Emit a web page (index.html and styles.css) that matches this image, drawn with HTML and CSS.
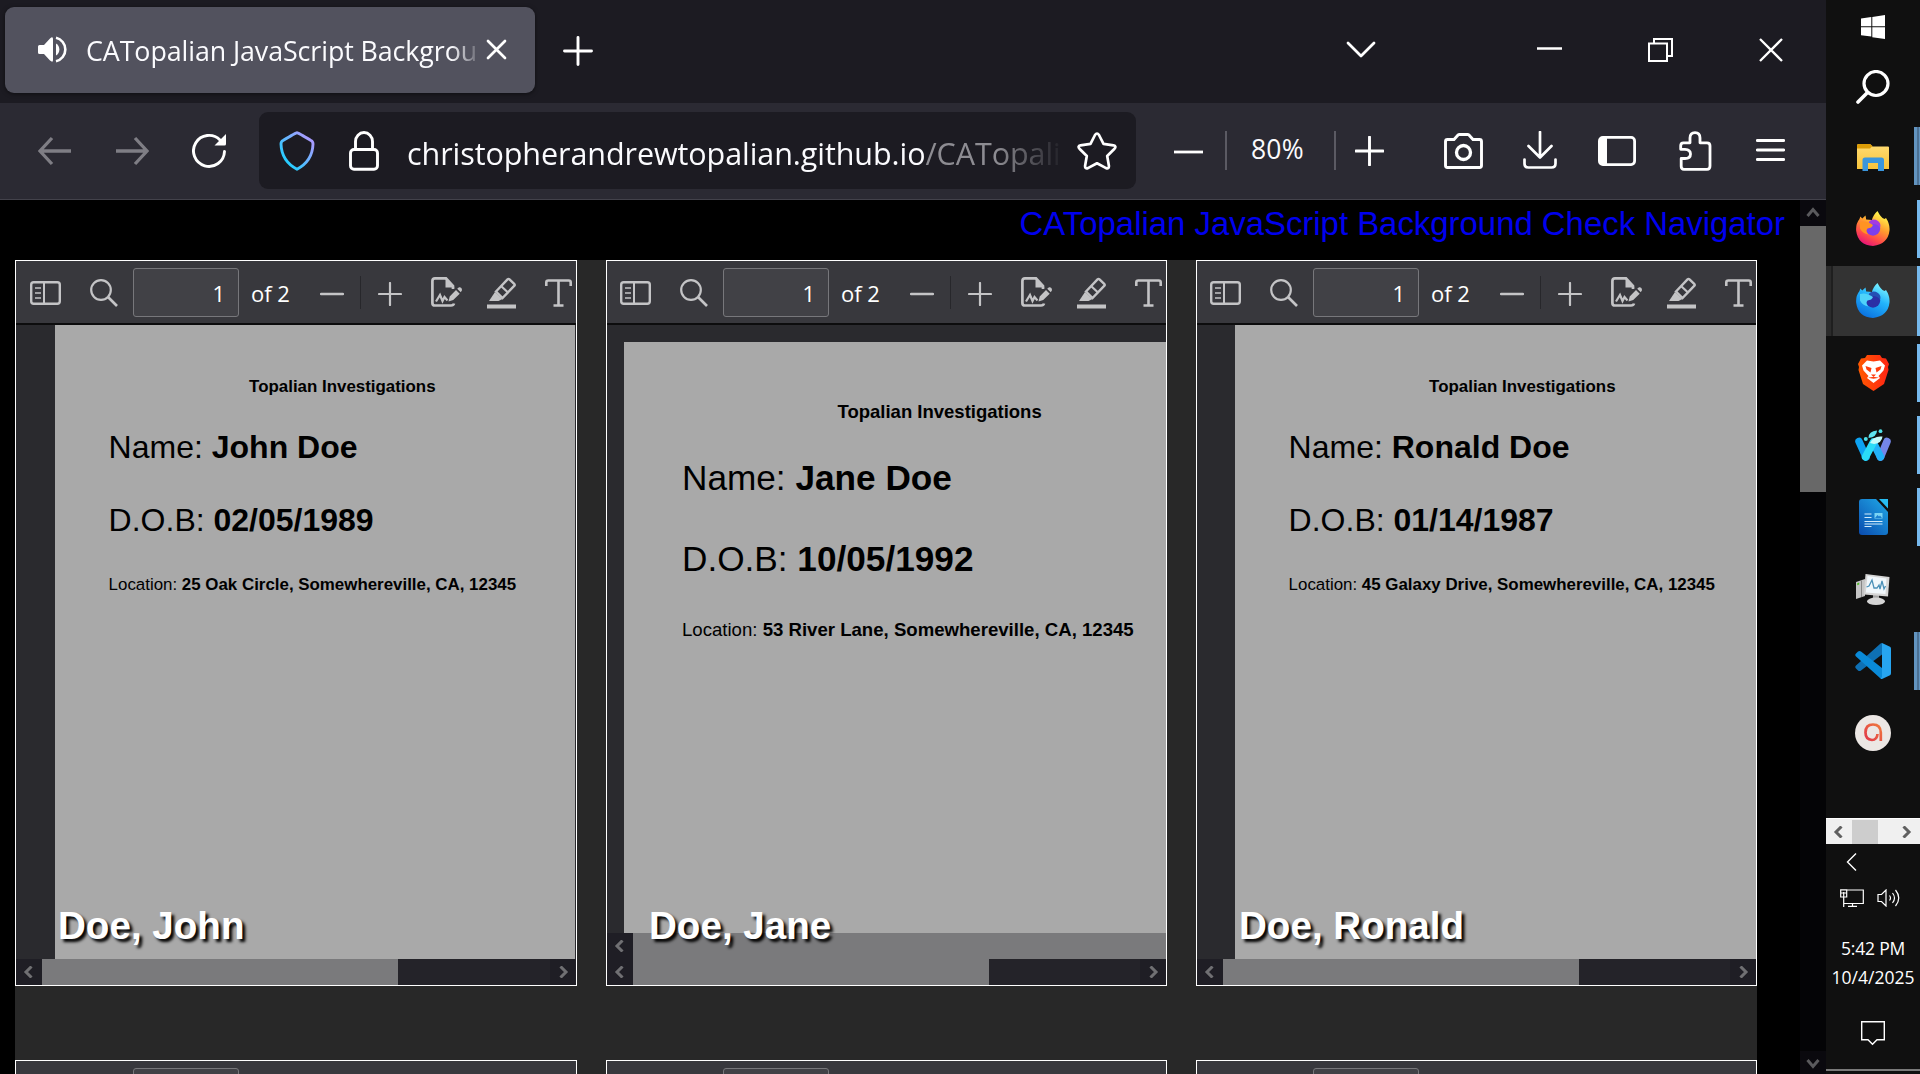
FILE: index.html
```html
<!DOCTYPE html>
<html lang="en">
<head>
<meta charset="utf-8">
<title>CATopalian JavaScript Background Check Navigator</title>
<link rel="stylesheet" href="styles.css">
</head>
<body>
<svg class="defs" width="0" height="0" aria-hidden="true">
  <defs>
    <linearGradient id="shieldG" x1="0" y1="1" x2="1" y2="0"><stop offset=".15" stop-color="#1fd0ff"/><stop offset=".85" stop-color="#a79cff"/></linearGradient>
    <linearGradient id="ffG" x1=".8" y1="0" x2=".3" y2="1"><stop offset=".1" stop-color="#fff24a"/><stop offset=".45" stop-color="#ff9a2e"/><stop offset=".75" stop-color="#ff4a4a"/><stop offset="1" stop-color="#e4107c"/></linearGradient>
    <linearGradient id="fbG" x1=".8" y1="0" x2=".3" y2="1"><stop offset=".05" stop-color="#7cf3ff"/><stop offset=".45" stop-color="#22b4fb"/><stop offset="1" stop-color="#0a70e0"/></linearGradient>
    <linearGradient id="brG"><stop offset="0" stop-color="#ff5a00"/><stop offset="1" stop-color="#ff2414"/></linearGradient>
    <linearGradient id="wrG" x1=".9" y1="0" x2=".1" y2="1"><stop offset="0" stop-color="#1fa6e6"/><stop offset="1" stop-color="#0b4fb0"/></linearGradient>
    <linearGradient id="foG" x1="0" y1="0" x2="0" y2="1"><stop offset="0" stop-color="#ffdc74"/><stop offset="1" stop-color="#f8c33a"/></linearGradient>
    <linearGradient id="aG" x1="0" y1="1" x2="1" y2="0"><stop offset="0" stop-color="#e0354a"/><stop offset="1" stop-color="#f07a3c"/></linearGradient>
  </defs>
  <symbol id="i-side" viewBox="0 0 31 24"><rect x="1.2" y="1.2" width="28.6" height="21.6" rx="2.5" fill="none" stroke="currentColor" stroke-width="2.4"/><path d="M14 1v22" stroke="currentColor" stroke-width="2"/><path d="M5 7h6M5 12h6M5 17h6" stroke="currentColor" stroke-width="1.6"/></symbol>
  <symbol id="i-find" viewBox="0 0 28 28"><circle cx="11" cy="11" r="9.8" fill="none" stroke="currentColor" stroke-width="2.2"/><path d="M18 18l9 9" stroke="currentColor" stroke-width="2.6"/></symbol>
  <symbol id="i-minus" viewBox="0 0 24 24"><path d="M1 12h22" stroke="currentColor" stroke-width="2.4" stroke-linecap="round"/></symbol>
  <symbol id="i-plus" viewBox="0 0 24 24"><path d="M1 12h22M12 1v22" stroke="currentColor" stroke-width="2.2" stroke-linecap="round"/></symbol>
  <symbol id="i-sign" viewBox="0 0 31 30"><path d="M23 26.5q-.5 2-3 2H4q-2.600 0-2.600-2.600V4Q1.400 1.400 4 1.400h11L22 9v3" fill="none" stroke="currentColor" stroke-width="2.700"/><path d="M14.500 1l9 9.500h-9z" fill="currentColor"/><path d="M5 24.500l4-6.500 2.500 6 2-4 3 3.500" fill="none" stroke="currentColor" stroke-width="2.200"/><path d="M17.500 24.500l1.200-5 6.300-6.500 3.700 3.700-6.500 6.300zM26.200 11.800l1.800-1.500q3-.3 3 3l-1.200 2z" fill="currentColor"/></symbol>
  <symbol id="i-mark" viewBox="0 0 29 32"><path d="M0 27.500h29v4H0z" fill="currentColor"/><path d="M9 14.500L20.500 2.400q1-1 2 0l4.700 4.500q1 1 0 2L15.500 21z" fill="none" stroke="currentColor" stroke-width="2.400"/><path d="M14 9l7 6.500" stroke="currentColor" stroke-width="2.200"/><path d="M8 15l7.500 7-4 2H2z" fill="currentColor"/></symbol>
  <symbol id="i-text" viewBox="0 0 27 28"><path d="M1.300 7V3.500Q1.300 1.500 3.300 1.500h20.400q2 0 2 2V7M13.500 1.500V26M8.500 26.500h10" fill="none" stroke="currentColor" stroke-width="2.600"/></symbol>
  <symbol id="i-left" viewBox="0 0 10 12"><path d="M8.500 .5L3 6l5.500 5.500" fill="none" stroke="currentColor" stroke-width="3"/></symbol>
  <symbol id="i-right" viewBox="0 0 10 12"><path d="M1.500 .5L7 6l-5.500 5.500" fill="none" stroke="currentColor" stroke-width="3"/></symbol>
  <symbol id="i-fox" viewBox="0 0 34 35"><path d="M21.500 0c1.500 3 3 5 5 7l2 1 1.500-1q4 6 3.500 12.500Q32 33 17 35 2 34 .2 20-.5 13 3.500 8l.8-2.500 2 2L9.500 4.500l.7 4L16 9Q17 4 21.500 0z"/></symbol>
</svg>
<div class="desktop">
<main class="browser">
  <header class="tabs">
    <div class="tab">
      <svg class="snd" width="30" height="27" viewBox="0 0 30 27"><path d="M1.500 9H6l6-6.500Q15 0 15 3v21q0 3-3 .5L6 18H1.500Q0 18 0 16.500v-6Q0 9 1.500 9z" fill="#fff"/><path d="M18 7.500a7 7 0 0 1 0 12z" fill="#fff"/><path d="M18 1.800a12 12 0 0 1 0 23.400" fill="none" stroke="#fff" stroke-width="2.600"/></svg>
      <span class="tab-title">CATopalian JavaScript Backgrou</span>
      <svg class="tab-x" width="21" height="21" viewBox="0 0 21 21"><path d="M2 2l17 17M19 2L2 19" stroke="#fff" stroke-width="2.700" stroke-linecap="round"/></svg>
    </div>
    <svg class="newtab" width="30" height="30" viewBox="0 0 30 30"><path d="M1.500 15h27M15 1.500v27" stroke="#fff" stroke-width="2.900" stroke-linecap="round"/></svg>
    <div class="win">
      <svg width="30" height="18" viewBox="0 0 30 18"><path d="M2 2l13 13L28 2" fill="none" stroke="#fff" stroke-width="2.800" stroke-linecap="round" stroke-linejoin="round"/></svg>
      <svg class="w-min" width="25" height="24" viewBox="0 0 25 24"><path d="M0 10.500h25" stroke="#fff" stroke-width="2.500"/></svg>
      <svg class="w-max" width="25" height="24" viewBox="0 0 25 24"><path d="M1 5.500h18V23H1zM6 5V1h18v17h-5" fill="none" stroke="#fff" stroke-width="2"/></svg>
      <svg class="w-cls" width="24" height="24" viewBox="0 0 24 24"><path d="M1 1l22 22M23 1L1 23" stroke="#fff" stroke-width="2.300"/></svg>
    </div>
  </header>
  <nav class="bar">
    <svg class="b-back dim" width="34" height="30" viewBox="0 0 34 30"><path d="M14 2L2 15l12 13M2 15h31" fill="none" stroke="currentColor" stroke-width="3.300"/></svg>
    <svg class="b-fwd dim" width="34" height="30" viewBox="0 0 34 30"><path d="M20 2l12 13-12 13M32 15H1" fill="none" stroke="currentColor" stroke-width="3.300"/></svg>
    <svg class="b-rel" width="35" height="35" viewBox="0 0 35 35"><path d="M32.500 18.500A15.500 15.500 0 1 1 28 7" fill="none" stroke="#fff" stroke-width="2.900" stroke-linecap="round"/><path d="M34 1v10q0 1.500-1.500 1.500H22.500z" fill="#fff"/></svg>
    <div class="url">
      <svg width="36" height="40" viewBox="0 0 36 40"><path d="M18 1.800Q19 1.800 32 9.500q2 1 2 3.500-.5 17-16 25.200Q2.500 30 2 13q0-2.500 2-3.500Q17 1.800 18 1.800z" fill="none" stroke="url(#shieldG)" stroke-width="2.900"/></svg>
      <svg class="lock" width="30" height="40" viewBox="0 0 30 40"><rect x="1.500" y="18.500" width="27" height="19.800" rx="3.500" fill="none" stroke="#fff" stroke-width="2.900"/><path d="M6.500 18V10.500a8.500 9 0 0 1 17 0V18" fill="none" stroke="#fff" stroke-width="2.900"/></svg>
      <span class="addr">christopherandrewtopalian.github.io<span class="path">/CATopali</span></span>
      <svg class="star" width="40" height="38" viewBox="0 0 40 38"><path d="M18 3q2-3 4 0l4.500 8.800 10 1.500q3.200.8 1 3.400l-7.300 7.300 1.700 9.800q.2 3.300-2.800 2.300L20 31.300l-9.100 4.800q-3 1-2.800-2.300L9.800 24 2.500 16.700q-2.200-2.600 1-3.400l10-1.500z" fill="none" stroke="#fff" stroke-width="2.700" stroke-linejoin="round"/></svg>
    </div>
    <svg class="z-min" width="30" height="4"><path d="M0 2h29" stroke="#fff" stroke-width="2.800"/></svg>
    <span class="sep s1"></span>
    <span class="zoom">80%</span>
    <span class="sep s2"></span>
    <svg class="z-plus" width="29" height="30" viewBox="0 0 29 30"><path d="M1 15h27M14.500 1v28" stroke="#fff" stroke-width="2.900" stroke-linecap="round"/></svg>
    <svg class="b-cam" width="39" height="36" viewBox="0 0 39 36"><path d="M3.500 6.500H10l4-4.500q.5-.5 1.500-.5h8q1 0 1.500.5l4 4.500h6.500q2 0 2 2v24q0 2-2 2h-32q-2 0-2-2v-24q0-2 2-2z" fill="none" stroke="#fff" stroke-width="2.900"/><circle cx="19.500" cy="19.500" r="7" fill="none" stroke="#fff" stroke-width="3.300"/></svg>
    <svg class="b-down" width="34" height="38" viewBox="0 0 34 38"><path d="M17 1v25M5.500 15L17 26.500 28.500 15M1.500 28.500v4q0 4 4 4h23q4 0 4-4v-4" fill="none" stroke="#fff" stroke-width="2.700" stroke-linecap="round" stroke-linejoin="round"/></svg>
    <svg class="b-side" width="38" height="30" viewBox="0 0 38 30"><rect x="1.400" y="1.400" width="35.200" height="27.200" rx="3.500" fill="none" stroke="#fff" stroke-width="2.800"/><path d="M2 2h7v26H2z" fill="#fff"/></svg>
    <svg class="b-ext" width="33" height="40" viewBox="0 0 33 40"><path d="M4.500 11.800h6.500V7q0-5.300 5-5.300T21 7v4.800h7q3 0 3 3V35q0 3.300-3 3.300H5q-2.800 0-2.800-3V27.500H6q5.500 0 5.500-4.500T6 18.300H1.700v-3.500q0-3 2.800-3z" fill="none" stroke="#fff" stroke-width="2.800" stroke-linejoin="round"/></svg>
    <svg class="b-menu" width="29" height="22" viewBox="0 0 29 22"><path d="M1.300 1.500h26.400M1.300 11h26.400M1.300 20.500h26.400" stroke="#fff" stroke-width="2.800" stroke-linecap="round"/></svg>
  </nav>
  <section class="content">
    <div class="site">
      <h1 class="site-title">CATopalian JavaScript Background Check Navigator</h1>
      <div class="grid">
        <article class="card">
          <div class="tools"><svg class="t1"><use href="#i-side"/></svg><svg class="t2"><use href="#i-find"/></svg><span class="pg">1</span><span class="of">of 2</span><svg class="t3"><use href="#i-minus"/></svg><i class="ts"></i><svg class="t4"><use href="#i-plus"/></svg><svg class="t5"><use href="#i-sign"/></svg><svg class="t6"><use href="#i-mark"/></svg><svg class="t7"><use href="#i-text"/></svg></div>
          <div class="view"><div class="page">
            <p class="org">Topalian Investigations</p>
            <p class="big">Name: <b>John Doe</b></p>
            <p class="big dob">D.O.B: <b>02/05/1989</b></p>
            <p class="loc">Location: <b>25 Oak Circle, Somewhereville, CA, 12345</b></p>
          </div></div>
          <div class="hbar"><span class="hb"><svg><use href="#i-left"/></svg></span><span class="thumb"></span><span class="hb end"><svg><use href="#i-right"/></svg></span></div>
          <div class="label">Doe, John</div>
        </article>
        <article class="card zoomed">
          <div class="tools"><svg class="t1"><use href="#i-side"/></svg><svg class="t2"><use href="#i-find"/></svg><span class="pg">1</span><span class="of">of 2</span><svg class="t3"><use href="#i-minus"/></svg><i class="ts"></i><svg class="t4"><use href="#i-plus"/></svg><svg class="t5"><use href="#i-sign"/></svg><svg class="t6"><use href="#i-mark"/></svg><svg class="t7"><use href="#i-text"/></svg></div>
          <div class="view"><div class="page">
            <p class="org">Topalian Investigations</p>
            <p class="big">Name: <b>Jane Doe</b></p>
            <p class="big dob">D.O.B: <b>10/05/1992</b></p>
            <p class="loc">Location: <b>53 River Lane, Somewhereville, CA, 12345</b></p>
          </div></div>
          <div class="hbar"><span class="hb"><svg><use href="#i-left"/></svg></span><span class="thumb full"></span></div>
          <div class="hbar"><span class="hb"><svg><use href="#i-left"/></svg></span><span class="thumb"></span><span class="hb end"><svg><use href="#i-right"/></svg></span></div>
          <div class="label">Doe, Jane</div>
        </article>
        <article class="card">
          <div class="tools"><svg class="t1"><use href="#i-side"/></svg><svg class="t2"><use href="#i-find"/></svg><span class="pg">1</span><span class="of">of 2</span><svg class="t3"><use href="#i-minus"/></svg><i class="ts"></i><svg class="t4"><use href="#i-plus"/></svg><svg class="t5"><use href="#i-sign"/></svg><svg class="t6"><use href="#i-mark"/></svg><svg class="t7"><use href="#i-text"/></svg></div>
          <div class="view"><div class="page">
            <p class="org">Topalian Investigations</p>
            <p class="big">Name: <b>Ronald Doe</b></p>
            <p class="big dob">D.O.B: <b>01/14/1987</b></p>
            <p class="loc">Location: <b>45 Galaxy Drive, Somewhereville, CA, 12345</b></p>
          </div></div>
          <div class="hbar"><span class="hb"><svg><use href="#i-left"/></svg></span><span class="thumb"></span><span class="hb end"><svg><use href="#i-right"/></svg></span></div>
          <div class="label">Doe, Ronald</div>
        </article>
        <article class="card next"><div class="tools"><span class="pg"></span></div></article>
        <article class="card next"><div class="tools"><span class="pg"></span></div></article>
        <article class="card next"><div class="tools"><span class="pg"></span></div></article>
      </div>
    </div>
    <div class="vbar">
      <span class="vb"><svg width="14" height="12" viewBox="0 0 14 12"><path d="M1.500 9L7 2.500l5.500 6.500" fill="none" stroke="#5a5a5d" stroke-width="3"/></svg></span>
      <span class="vthumb"></span>
      <span class="vb last"><svg width="14" height="12" viewBox="0 0 14 12"><path d="M1.500 3L7 9.500 12.500 3" fill="none" stroke="#5a5a5d" stroke-width="3"/></svg></span>
    </div>
  </section>
</main>
<aside class="taskbar">
  <div class="slot start"><svg width="24" height="24" viewBox="0 0 24 24"><path d="M0 3.500l10.300-1.400v9.200H0zM11.300 1.900L24 0v11.300H11.300zM0 12.300h10.300v9.300L0 20.300zM11.300 12.300H24V24l-12.700-1.800z" fill="#fff"/></svg></div>
  <div class="slot srch"><svg width="34" height="34" viewBox="0 0 34 34"><circle cx="20" cy="13.500" r="12" fill="none" stroke="#fff" stroke-width="3.200"/><path d="M11.500 22.500L2 32" stroke="#fff" stroke-width="3.600" stroke-linecap="round"/></svg></div>
  <div class="slot multi"><svg width="32" height="28" viewBox="0 0 32 28"><path d="M0 1.500Q0 0 1.500 0H13l2.500 2.500H31q1 0 1 1V25H0z" fill="url(#foG)"/><path d="M0 1.500Q0 0 1.500 0H13l2.500 2L13 4.500H0z" fill="#dc9c06"/><path d="M5.500 27V16q0-2.500 2.500-2.500h16.500q2.500 0 2.500 2.500v11h-6v-8H11v8z" fill="#3a96dd"/></svg></div>
  <div class="slot on"><svg width="34" height="35" viewBox="0 0 34 35"><use href="#i-fox" width="34" height="35" fill="url(#ffG)"/><circle cx="17" cy="17.500" r="7.200" fill="#7b3fee"/><path d="M13 10.500q4-3.500 9-.5 3.500 2.500 2 7Q22 12.500 15 13z" fill="#a43be0"/><path d="M4 11q6-2 13 3-1 3-5.500 3.500-2.500 3 1 6-6-1-8.500-6z" fill="#ff9322"/></svg></div>
  <div class="slot on active"><svg width="34" height="35" viewBox="0 0 34 35"><use href="#i-fox" width="34" height="35" fill="url(#fbG)"/><circle cx="17" cy="17.500" r="7.200" fill="#2b2fa6"/><path d="M13 10.500q4-3.500 9-.5 3.500 2.500 2 7Q22 12.500 15 13z" fill="#2450b4"/><path d="M4 11q6-2 13 3-1 3-5.500 3.500-2.500 3 1 6-6-1-8.500-6z" fill="#4fd3fa"/></svg></div>
  <div class="slot on"><svg width="31" height="36" viewBox="0 0 31 36"><path d="M7 3l2-3h13l2 3 4 .5 3 5.500-1 3 .5 3L26 29l-10.500 7L5 29 .5 15 1 12 0 9l3-5.500z" fill="url(#brG)"/><path d="M9 5.500l6.500 1 6.500-1 5 5-1.500 5-5 5.500 1.500 2-6.500 5-6.500-5L10.500 21l-5-5.500L4 10.500z" fill="#fff"/><path d="M7.500 11l6 2-1 4.500-4-3zM23.500 11l-6 2 1 4.500 4-3zM13 19.500h5L15.500 22zM10 22.800l5.500 1 5.500-1-5.500-1z" fill="#ff3d0e"/></svg></div>
  <div class="slot on"><svg width="36" height="33" viewBox="0 0 36 33"><path d="M4 12.500l7 15.500" stroke="#0da2f2" stroke-width="7.500" stroke-linecap="round"/><path d="M32 12.500l-6.500 15.500" stroke="#7486e8" stroke-width="7.500" stroke-linecap="round"/><path d="M18.500 14l7 14" stroke="#22b2f8" stroke-width="7.500" stroke-linecap="round"/><path d="M10.500 28l8-15" stroke="#2adcf8" stroke-width="7.500" stroke-linecap="round"/><path d="M15 14q3-7.500 12.500-6.500Q27 14 19 15z" fill="#c3fbfb"/><path d="M13.500 9q0-7 8.500-7.500Q22 8 13.500 9z" fill="#5fe4f0"/><circle cx="25.500" cy="2.200" r="1.900" fill="#4fe0e8"/><circle cx="10.800" cy="10" r="2" fill="#4fe0e8"/></svg></div>
  <div class="slot on"><svg width="29" height="36" viewBox="0 0 29 36"><path d="M3 0h14l12 13v20q0 3-3 3H3q-3 0-3-3V3q0-3 3-3z" fill="url(#wrG)"/><path d="M20 0h9v9.500z" fill="#27bdf2"/><path d="M5.500 15h7M5.500 18.500h7M5.500 22.500h18M5.500 25h18M5.500 27.500h7" stroke="#d3ebfb" stroke-width="1.200"/><path d="M15.500 14h8v5.500h-8z" fill="#7ad4f4"/><path d="M16 19l2.500-3 1.500 1.500 1-1 2 2.500z" fill="#1a7fd0"/></svg></div>
  <div class="slot mon"><svg width="34" height="32" viewBox="0 0 34 32"><path d="M0 8l9-3V22L0 25z" fill="#c4c4c4"/><path d="M5.500 6.500v16.500" stroke="#858585" stroke-width="1"/><path d="M1.200 9.200l2-.7v2l-2 .7z" fill="#4fb928"/><path d="M17 21h6v6h-6z" fill="#a5a5a5"/><ellipse cx="20" cy="27.300" rx="9" ry="3.700" fill="#d5d5d5"/><path d="M9.500 0l24 3L32 22.500 8 20.500z" fill="#d6d6d6"/><path d="M11.500 2l19 2.500L29.500 20 9.800 18.500z" fill="#f1f7fb"/><path d="M10.500 13l2.500-1 3-6 2 8 3 0 2-3 1 4 2-8 2 8 1.500-3" fill="none" stroke="#4c91b8" stroke-width="1.300"/></svg></div>
  <div class="slot multi"><svg width="36" height="36" viewBox="0 0 36 36"><path d="M1 22.500Q-.5 24 1 25.500l2 2q1.500 1 3 0L27 11.500V0q-1 0-2 1z" fill="#0e70b4"/><path d="M1 13.500Q-.5 12 1 10.500l2-2q1.500-1 3 0L27 25v11q-1 0-2-1z" fill="#0a8ad8"/><path d="M27 0l8 3.700q1 .6 1 2v24.600q0 1.400-1 2L27 36q-.8.200-1.500-.5L27 34z" fill="#27a5f0"/></svg></div>
  <div class="slot"><svg width="36" height="36" viewBox="0 0 36 36"><circle cx="18" cy="18" r="18" fill="#ece7e4"/><path d="M22.500 19q-.5 6-5.500 6-6.500-.5-6.500-7.500 0-8 7.500-8t7.800 8V26" fill="none" stroke="url(#aG)" stroke-width="2.700"/></svg></div>
  <div class="deskbar"><svg width="10" height="12"><use href="#i-left"/></svg><span></span><svg width="10" height="12"><use href="#i-right"/></svg></div>
  <svg class="more" width="11" height="18" viewBox="0 0 11 18"><path d="M10 .5L1.500 9l8.500 8.500" fill="none" stroke="#fff" stroke-width="1.400"/></svg>
  <div class="tray">
    <svg width="24" height="18" viewBox="0 0 24 18"><path d="M7 1h16.300v13.500H4M.7 .8h6V8h-6zM1 4h5.500M3.700 3v15M8 17.300h9M12.500 14.500v3" fill="none" stroke="#fff" stroke-width="1.200"/></svg>
    <svg width="23" height="18" viewBox="0 0 23 18"><path d="M1 5.500h3.500L9 1v16l-4.500-4.500H1z" fill="none" stroke="#fff" stroke-width="1.200"/><path d="M12.500 6.500q2 2.500 0 5M15.500 4q4 5 0 10M18.500 1q6.500 8 0 16" fill="none" stroke="#fff" stroke-width="1.200"/></svg>
  </div>
  <div class="clock"><span class="time">5:42 PM</span><span class="date">10/4/2025</span></div>
  <svg class="note" width="24" height="25" viewBox="0 0 24 25"><path d="M.7 .7h22.600v18H16L11.500 23.300 7 18.700H.7z" fill="none" stroke="#fff" stroke-width="1.400"/></svg>
  <div class="edge"></div>
</aside>
</div>
</body>
</html>
```
FILE: styles.css
```css
* { box-sizing: border-box; }
body { margin: 0; background: #000; overflow: hidden; font-family: "Liberation Sans", Arial, sans-serif; }
p, h1 { margin: 0; }
svg { display: block; flex: none; }
.defs { position: absolute; }
.desktop { display: flex; width: 1920px; height: 1074px; overflow: hidden; }

/* browser window */
.browser { width: 1826px; display: flex; flex-direction: column; }
.tabs { height: 103px; background: #1c1b22; display: flex; padding: 7px 43px 0 5px; font-family: "Open Sans", "Noto Sans", sans-serif; }
.tab { width: 530px; height: 86px; border-radius: 9px; background: #52525e; box-shadow: 0 1px 4px rgba(0,0,0,.5); display: flex; align-items: flex-start; padding-left: 33px; }
.snd { margin-top: 29px; }
.tab-title { margin: 24px 0 0 18px; width: 395px; white-space: nowrap; font-size: 26.800px; line-height: 40px; letter-spacing: -.08px; color: #fbfbfe; -webkit-mask-image: linear-gradient(90deg, #000 365px, transparent 396px); mask-image: linear-gradient(90deg, #000 365px, transparent 396px); }
.tab-x { margin: 32px 0 0 5px; }
.newtab { margin: 29px 0 0 28px; }
.win { margin-left: auto; display: flex; padding-top: 31px; }
.win svg:first-child { margin-top: 3px; }
.w-min { margin-left: 161px; }
.w-max { margin-left: 86px; }
.w-cls { margin-left: 86px; }

.bar { height: 97px; background: #2b2a33; border-bottom: 1px solid #43424b; display: flex; align-items: center; padding: 0 0 1px 38px; font-family: "Open Sans", "Noto Sans", sans-serif; color: #fbfbfe; }
.dim { color: #7f7e85; }
.b-fwd { margin-left: 43px; }
.b-rel { margin-left: 43px; }
.url { width: 877px; height: 77px; margin-left: 32px; border-radius: 9px; background: #1c1b22; display: flex; align-items: center; padding-left: 20px; }
.lock { margin-left: 34px; }
.addr { margin-left: 28px; width: 655px; white-space: nowrap; font-size: 30.500px; line-height: 44px; padding-top: 4px; letter-spacing: -.07px; -webkit-mask-image: linear-gradient(90deg, #000 590px, transparent 658px); mask-image: linear-gradient(90deg, #000 590px, transparent 658px); }
.path { color: #8d8c92; }
.star { margin-left: 15px; }
.z-min { margin: 2px 0 0 38px; }
.sep { width: 2px; height: 39px; background: #5b5a63; }
.s1 { margin-left: 21px; }
.zoom { width: 56px; margin-left: 24px; font-size: 26.500px; line-height: 36px; margin-top: -4px; letter-spacing: .2px; white-space: nowrap; }
.s2 { margin-left: 27px; }
.z-plus { margin: 1px 0 0 19px; }
.b-cam { margin-left: 60px; }
.b-down { margin-left: 40px; margin-top: -2px; }
.b-side { margin-left: 41px; }
.b-ext { margin-left: 43px; }
.b-menu { margin: -2px 0 0 44px; }

/* web page */
.content { flex: 1; display: flex; min-height: 0; }
.site { flex: 1; padding-left: 15px; overflow: hidden; background: #000; }
.site-title { height: 60px; padding: 4px 15px 0 0; text-align: right; font-size: 32.900px; line-height: 40px; font-weight: 400; color: #0000ee; white-space: nowrap; }
.grid { width: 1742px; background: #282828; display: grid; grid-template-columns: 562px 561px 561px; column-gap: 29px; row-gap: 74px; }
.card { position: relative; height: 726px; border: 1px solid #fff; background: #2a2a2e; display: flex; flex-direction: column; overflow: hidden; }
.tools { height: 64px; flex: none; background: #38383d; border-bottom: 2px solid #0c0c0d; display: flex; align-items: flex-start; overflow: hidden; color: #c4c4c6; font-family: "Open Sans", "Noto Sans", sans-serif; }
.t1 { width: 31px; height: 24px; margin: 20px 0 0 14px; }
.t2 { width: 28px; height: 28px; margin: 18px 0 0 29px; }
.pg { flex: none; width: 106px; height: 49px; margin: 7px 0 0 15px; border: 1px solid #77777b; border-radius: 3px; background: #414146; color: #fff; font-size: 22px; line-height: 49px; text-align: right; padding-right: 13px; }
.of { width: 40px; flex: none; margin: 7px 0 0 12px; color: #fff; font-size: 22px; line-height: 51px; letter-spacing: 0; white-space: nowrap; }
.t3 { width: 24px; height: 24px; margin: 21px 0 0 29px; }
.ts { flex: none; width: 1px; height: 33px; margin: 15px 0 0 16px; background: #27272b; }
.t4 { width: 24px; height: 24px; margin: 21px 0 0 17px; }
.t5 { width: 31px; height: 30px; margin: 16px 0 0 29px; }
.t6 { width: 29px; height: 32px; margin: 16px 0 0 25px; }
.t7 { width: 27px; height: 28px; margin: 18px 0 0 29px; }
.card + .card .t1 { margin-left: 13px; }
.view { flex: 1; padding-left: 39px; display: flex; min-height: 0; }
.page { flex: 1; background: #a9a9a9; color: #000; padding: 52px 0 0 53.600px; margin-right: 1px; white-space: nowrap; }
.org { font-weight: 700; font-size: 16.900px; line-height: 20px; margin-left: 140.500px; }
.big { font-size: 32px; line-height: 36px; margin-top: 32px; }
.dob { margin-top: 37px; }
.loc { font-size: 16.900px; line-height: 20px; margin-top: 37px; }
.card:nth-child(3) .view { padding-left: 38px; }
.card:nth-child(3) .page, .zoomed .page { margin-right: 0; }
.zoomed .view { padding: 17px 0 0 17px; }
.zoomed .page { padding: 60px 0 0 58px; }
.zoomed .org { font-size: 18.500px; margin-left: 155.500px; }
.zoomed .big { font-size: 35.200px; line-height: 40px; margin-top: 36px; }
.zoomed .dob { margin-top: 41px; }
.zoomed .loc { font-size: 18.600px; margin-top: 41px; }
.hbar { height: 26px; flex: none; background: #242329; display: flex; }
.hb { width: 26px; height: 26px; padding-right: 2px; background: #1f1e25; color: #707073; display: flex; align-items: center; justify-content: center; }
.hb svg { width: 10px; height: 12px; }
.end { margin-left: auto; padding: 0 0 0 2px; }
.thumb { width: 356px; background: #7a7a7c; }
.full { width: auto; flex: 1; }
.label { position: absolute; left: 42px; bottom: 37px; font-size: 38.600px; line-height: 44px; font-weight: 700; color: #fff; text-shadow: 3px 3px 3px #000; white-space: nowrap; }
.next .pg { margin-left: 117px; }
.card + .next + .next .pg { margin-left: 116px; }
.vbar { width: 26px; background: #040406; display: flex; flex-direction: column; }
.vb { height: 26px; background: #0a090e; display: flex; align-items: center; justify-content: center; }
.vthumb { height: 266px; background: #686868; }
.last { margin-top: auto; height: 23px; }

/* desktop taskbar */
.taskbar { width: 94px; height: 1074px; background: #101010; display: flex; flex-direction: column; color: #fff; }
.slot { flex: none; height: 72px; display: flex; align-items: center; justify-content: center; position: relative; }
.start { height: 54px; }
.srch { height: 66px; }
.slot:nth-child(3) { height: 73px; padding-top: 2px; }
.slot:nth-child(4) { padding-bottom: 1px; }
.on::after, .multi::after { content: ""; position: absolute; right: 0; top: 7px; width: 3px; height: 58px; background: #76b9ed; }
.multi::after { width: 6px; background: linear-gradient(90deg, #6294c0 3px, #4b7093 3px, #4b7093 5px, #6294c0 5px); }
.active { height: 70px; margin: 1px 0; padding-bottom: 2px; background: linear-gradient(90deg, #2b2b2b 5px, #1f1f1f 5px, #1f1f1f 7px, #333 7px); }
.active::after { top: 0; height: 70px; }
.mon { padding-top: 2px; }
.deskbar { flex: none; height: 26px; margin-top: 49px; background: #f0f0f0; border-top: 1px solid #fff; display: flex; align-items: center; color: #606060; padding: 0 8px 0 7px; }
.deskbar span { width: 26px; height: 24px; background: #cdcdcd; margin: 0 24px 0 9px; }
.more { margin: 9px 0 0 20px; }
.tray { display: flex; gap: 13px; margin: 18px 0 0 14px; }
.clock { margin-top: 26px; font-family: "Open Sans", "Noto Sans", sans-serif; font-size: 17.500px; line-height: 30px; display: flex; flex-direction: column; align-items: center; letter-spacing: -.2px; white-space: nowrap; }
.date { letter-spacing: 0; line-height: 29px; }
.note { margin: 29px 0 0 35px; }
.edge { height: 2px; margin-top: 23px; background: #7a7a7a; }
```
